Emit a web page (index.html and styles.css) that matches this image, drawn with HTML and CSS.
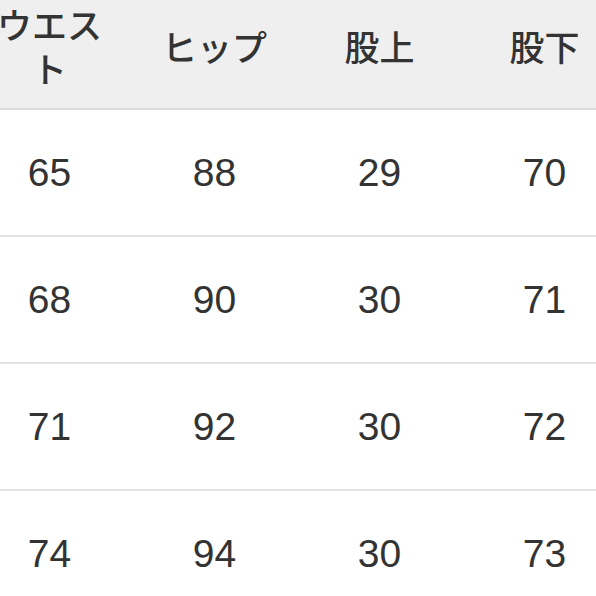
FILE: index.html
```html
<!DOCTYPE html>
<html lang="ja">
<head>
<meta charset="utf-8">
<link rel="stylesheet" href="styles.css">
</head>
<body>
<table class="size-table">
  <colgroup><col class="c"><col class="c"><col class="c"><col class="c"></colgroup>
  <thead>
    <tr class="head"><th>ウエスト</th><th>ヒップ</th><th>股上</th><th>股下</th></tr>
  </thead>
  <tbody>
    <tr class="row"><td>65</td><td>88</td><td>29</td><td>70</td></tr>
    <tr class="row"><td>68</td><td>90</td><td>30</td><td>71</td></tr>
    <tr class="row"><td>71</td><td>92</td><td>30</td><td>72</td></tr>
    <tr class="row"><td>74</td><td>94</td><td>30</td><td>73</td></tr>
  </tbody>
</table>
</body>
</html>
```
FILE: styles.css
```css
html, body {
  margin: 0;
  padding: 0;
  background: #ffffff;
  overflow: hidden;
}
.size-table {
  border-collapse: collapse;
  table-layout: fixed;
  width: 660px;
  margin-left: -33px;
  color: #333333;
}
.c { width: 165px; }
.head th {
  background: #efefef;
  height: 92px;
  padding: 0 15px 16px;
  font-family: "Noto Sans CJK JP", "Liberation Sans", sans-serif;
  font-weight: 500;
  font-size: 35px;
  line-height: 44px;
  text-align: center;
  vertical-align: middle;
  border-bottom: 2px solid #dcdcdc;
}
.row td {
  height: 125px;
  padding: 0;
  font-family: "Liberation Sans", Arial, sans-serif;
  font-size: 39px;
  text-align: center;
  vertical-align: middle;
  border-bottom: 2px solid #e2e2e2;
}
```
